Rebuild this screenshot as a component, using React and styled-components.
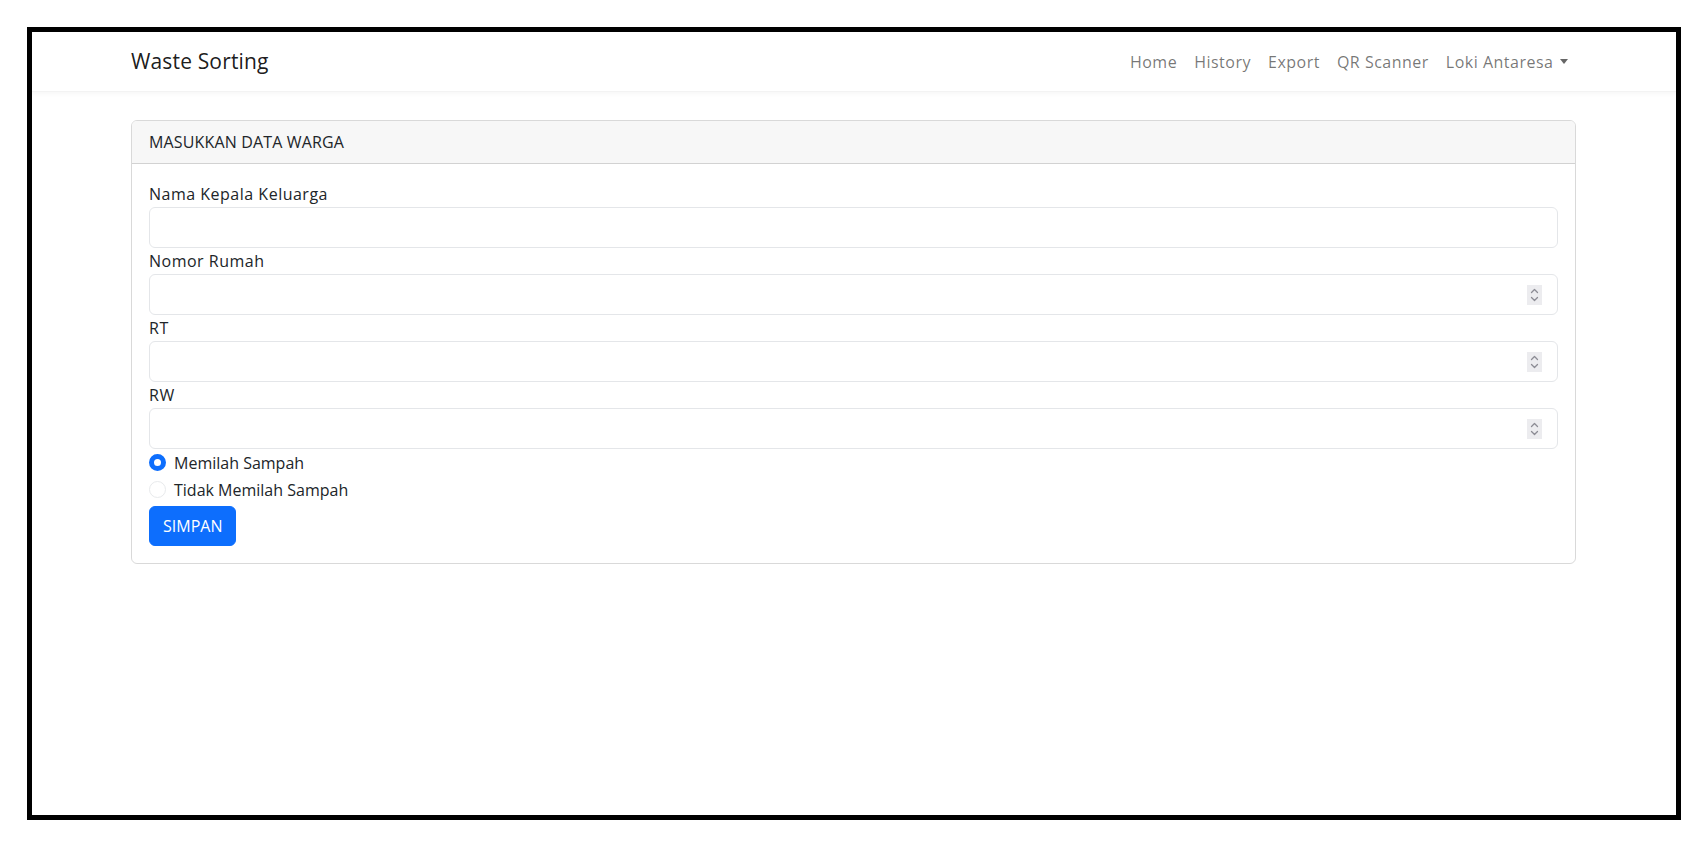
import React, { useState } from 'react';
import styled, { createGlobalStyle } from 'styled-components';

const GlobalStyle = createGlobalStyle`
  html, body {
    margin: 0;
    padding: 0;
    background: #ffffff;
  }
  body {
    font-family: "Open Sans", "Liberation Sans", sans-serif;
    font-size: 16px;
    line-height: 1.5;
    color: #212529;
  }
  * {
    box-sizing: border-box;
  }
`;

const Frame = styled.div`
  margin: 27px 0 0 27px;
  width: 1654px;
  height: 793px;
  border: 5px solid #000000;
  background: #ffffff;
  display: flex;
  flex-direction: column;
`;

const Navbar = styled.nav`
  height: 60px;
  background: #ffffff;
  box-shadow: 0 2px 4px rgba(0, 0, 0, 0.035);
  border-bottom: 1px solid #f3f3f3;
`;

const Container = styled.div`
  width: 1445px;
  margin-left: 99px;
  height: 100%;
  display: flex;
  align-items: center;
  justify-content: space-between;
`;

const Brand = styled.a`
  font-size: 21px;
  color: rgba(0, 0, 0, 0.9);
  text-decoration: none;
  letter-spacing: 0.15px;
`;

const NavList = styled.ul`
  display: flex;
  list-style: none;
  margin: 0;
  padding: 0;
`;

const NavLink = styled.a`
  display: flex;
  align-items: center;
  padding: 8px 8.5px;
  font-size: 16px;
  letter-spacing: 0.5px;
  color: rgba(0, 0, 0, 0.55);
  text-decoration: none;
  cursor: pointer;
`;

const Caret = styled.span`
  display: inline-block;
  margin-left: 6px;
  border-top: 5px solid rgba(0, 0, 0, 0.6);
  border-left: 4.5px solid transparent;
  border-right: 4.5px solid transparent;
`;

const Main = styled.div`
  width: 1445px;
  margin: 28px 0 0 99px;
`;

const Card = styled.div`
  border: 1px solid rgba(0, 0, 0, 0.15);
  border-radius: 6px;
  overflow: hidden;
`;

const CardHeader = styled.div`
  height: 43px;
  padding: 0 17px;
  display: flex;
  align-items: center;
  background: #f7f7f7;
  border-bottom: 1px solid rgba(0, 0, 0, 0.15);
  font-size: 16px;
  letter-spacing: 0.15px;
  color: #212529;
`;

const CardBody = styled.form`
  padding: 17px;
  display: flex;
  flex-direction: column;
  align-items: flex-start;
`;

const Label = styled.label`
  display: block;
  line-height: 26px;
  font-size: 16px;
  letter-spacing: 0.5px;
`;

const Field = styled.div`
  position: relative;
  width: 100%;
`;

const Input = styled.input`
  display: block;
  width: 100%;
  height: 41px;
  padding: 6px 13px;
  font: inherit;
  color: #212529;
  border: 1px solid #e4e6e9;
  border-radius: 6px;
  background: #ffffff;
  outline: none;
  -moz-appearance: textfield;

  &::-webkit-inner-spin-button,
  &::-webkit-outer-spin-button {
    -webkit-appearance: none;
    margin: 0;
  }
`;

const Spinner = styled.span`
  position: absolute;
  right: 16px;
  top: 50%;
  transform: translateY(-50%);
  width: 15px;
  height: 20px;
  background: #ececef;
  display: flex;
  align-items: center;
  justify-content: center;
  pointer-events: none;
`;

const Check = styled.label`
  display: flex;
  align-items: center;
  height: 27px;
  font-size: 16px;
  cursor: pointer;
`;

const Radio = styled.span`
  width: 17px;
  height: 17px;
  border-radius: 50%;
  margin-right: 8px;
  flex-shrink: 0;
  border: ${(p) => (p.$checked ? '5px solid #0d6efd' : '1px solid #e8eaec')};
  background: #ffffff;
`;

const Button = styled.button`
  margin-top: 3px;
  height: 40px;
  padding: 0 13px;
  font: inherit;
  font-size: 16px;
  color: #ffffff;
  background: #0d6efd;
  border: 1px solid #0d6efd;
  border-radius: 6px;
  cursor: pointer;
`;

const fields = [
  { label: 'Nama Kepala Keluarga', type: 'text' },
  { label: 'Nomor Rumah', type: 'number' },
  { label: 'RT', type: 'number' },
  { label: 'RW', type: 'number' },
];

const SpinIcon = () => (
  <svg width="9" height="14" viewBox="0 0 9 14" fill="none" stroke="#8c8c94" strokeWidth="1.3" strokeLinecap="round" strokeLinejoin="round">
    <path d="M1.5 4.5 L4.5 1.5 L7.5 4.5" />
    <path d="M1.5 9.5 L4.5 12.5 L7.5 9.5" />
  </svg>
);

export default function App() {
  const [sorting, setSorting] = useState(true);

  return (
    <>
      <GlobalStyle />
      <Frame>
        <Navbar>
          <Container>
            <Brand>Waste Sorting</Brand>
            <NavList>
              <li><NavLink>Home</NavLink></li>
              <li><NavLink>History</NavLink></li>
              <li><NavLink>Export</NavLink></li>
              <li><NavLink>QR Scanner</NavLink></li>
              <li>
                <NavLink>
                  Loki Antaresa
                  <Caret />
                </NavLink>
              </li>
            </NavList>
          </Container>
        </Navbar>
        <Main>
          <Card>
            <CardHeader>MASUKKAN DATA WARGA</CardHeader>
            <CardBody onSubmit={(e) => e.preventDefault()}>
              {fields.map((f) => (
                <React.Fragment key={f.label}>
                  <Label>{f.label}</Label>
                  <Field>
                    <Input type={f.type} />
                    {f.type === 'number' && (
                      <Spinner>
                        <SpinIcon />
                      </Spinner>
                    )}
                  </Field>
                </React.Fragment>
              ))}
              <Check onClick={() => setSorting(true)}>
                <Radio $checked={sorting} />
                Memilah Sampah
              </Check>
              <Check onClick={() => setSorting(false)}>
                <Radio $checked={!sorting} />
                Tidak Memilah Sampah
              </Check>
              <Button type="submit">SIMPAN</Button>
            </CardBody>
          </Card>
        </Main>
      </Frame>
    </>
  );
}
